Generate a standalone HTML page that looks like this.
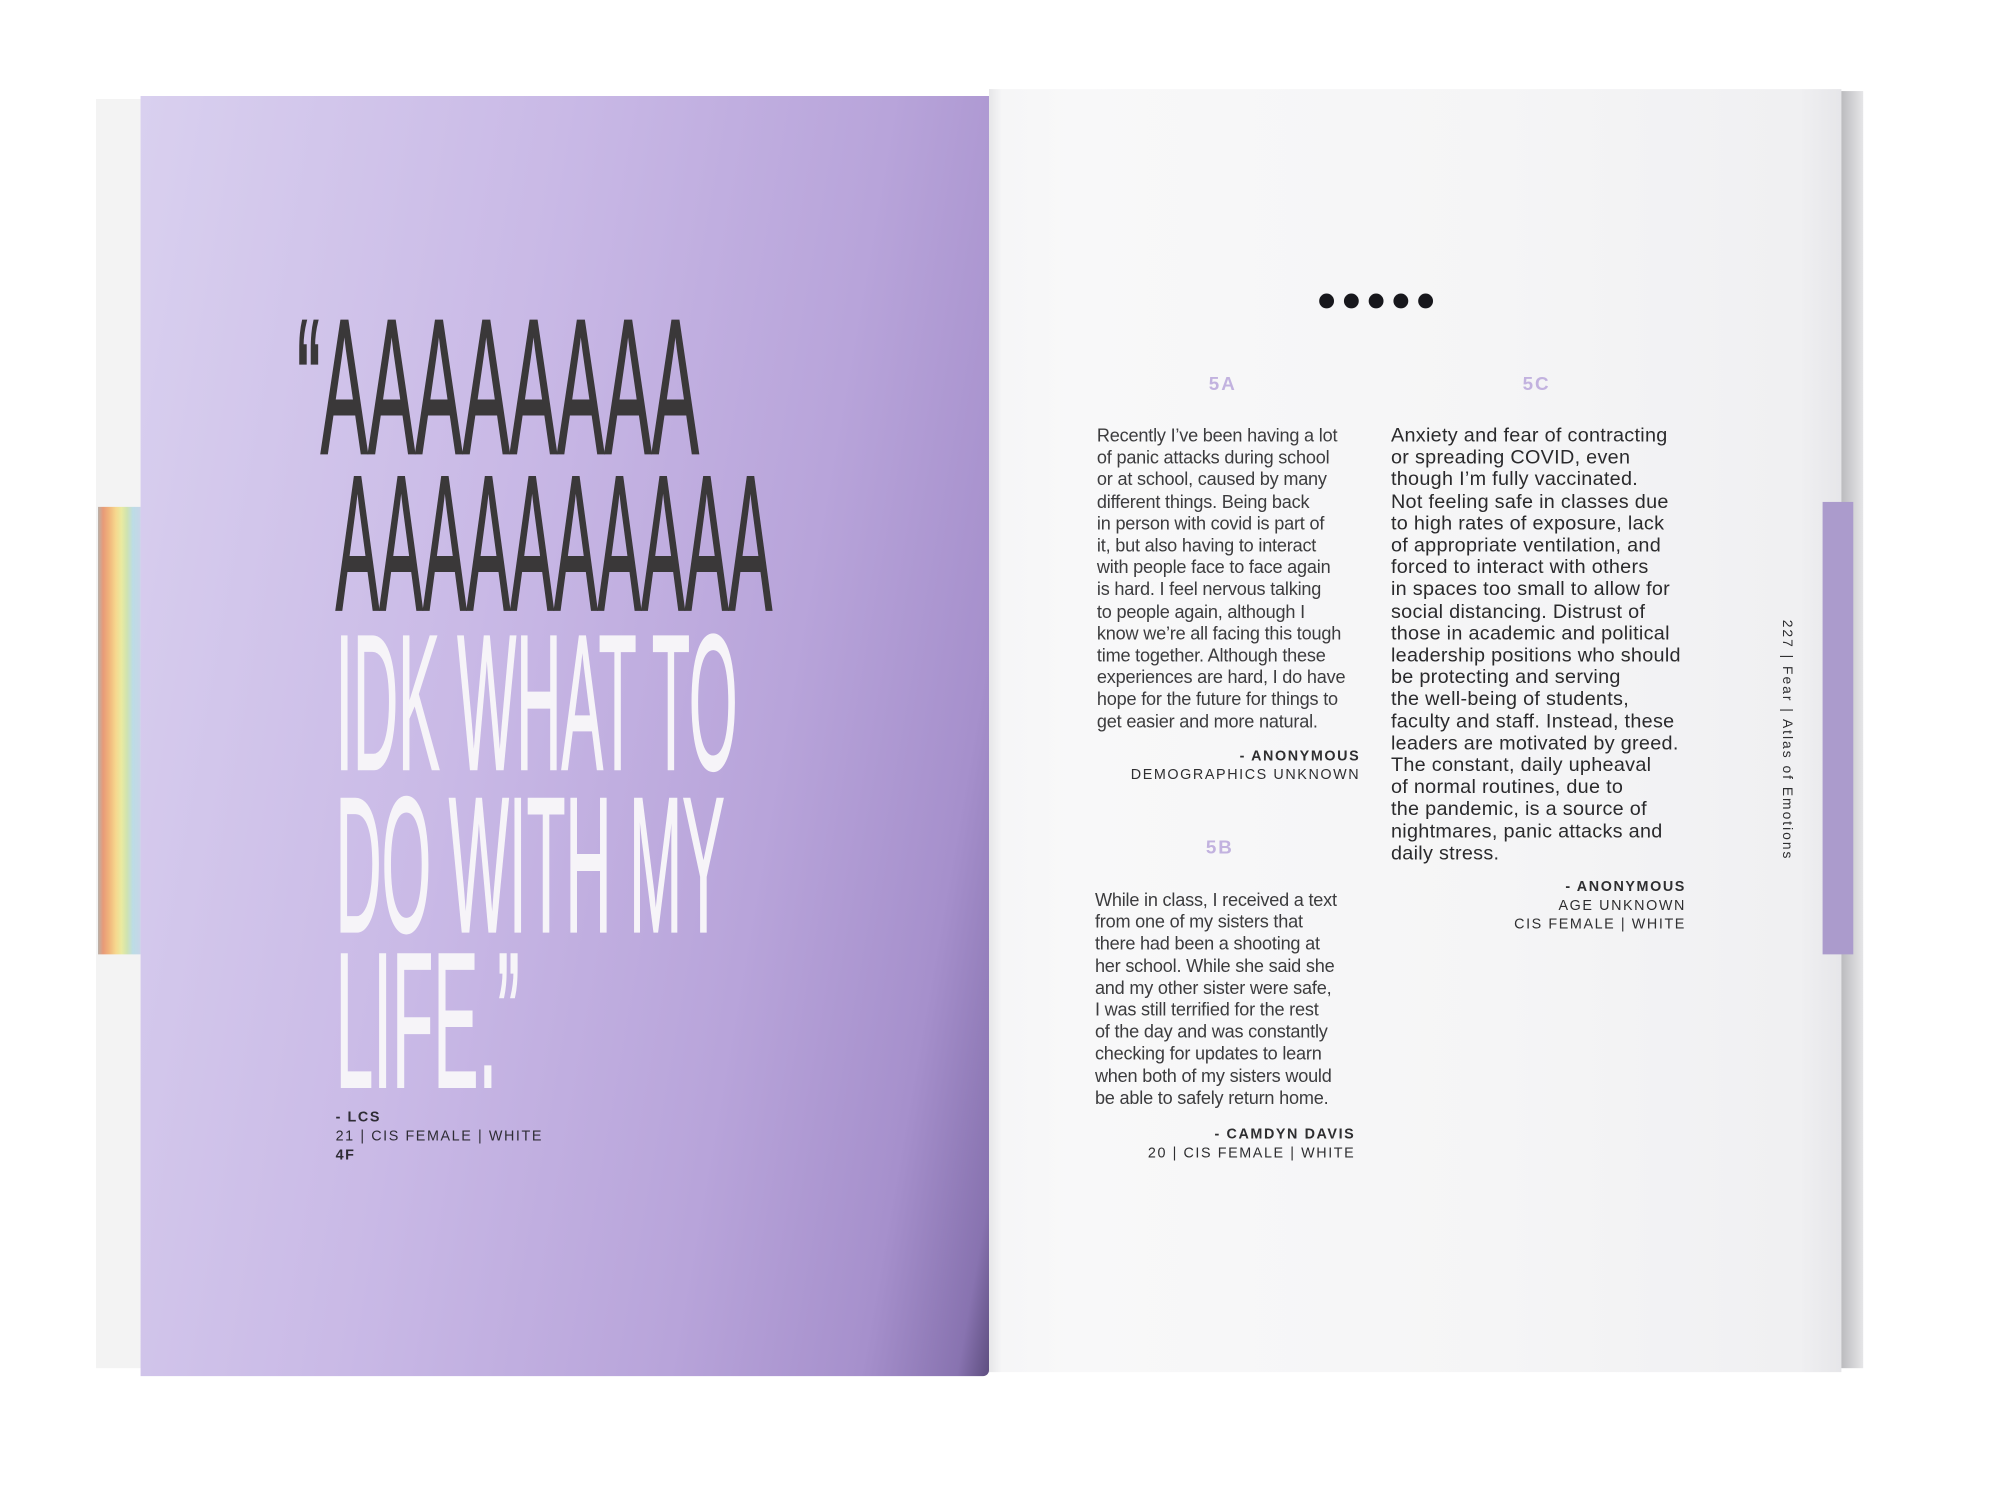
<!DOCTYPE html>
<html><head><meta charset="utf-8"><style>
*{margin:0;padding:0;box-sizing:border-box}
body{width:2000px;height:1500px;background:#fff;position:relative;overflow:hidden;font-family:"Liberation Sans",sans-serif}
#w{position:absolute;left:0;top:0;width:2000px;height:1500px;transform-origin:0 0;transform:scale(0.99)}
.a{position:absolute}
.p{position:absolute;white-space:nowrap;color:#3a3a3c}
.r{text-align:right}
.lbl{color:#c2b2df;font-weight:bold;font-size:19px;letter-spacing:2px}
.cap{font-size:14.5px;letter-spacing:1.6px;color:#2e2e30;line-height:19px}
</style></head><body><div id="w">
<div class="a" style="left:97px;top:100px;width:60px;height:1282px;background:#f3f3f3"></div>
<div class="a" style="left:99px;top:512px;width:43px;height:452px;background:linear-gradient(90deg,#b8b0a8 0,#e89a78 12%,#f0b27a 25%,#f6d88e 42%,#eaeaa0 55%,#cfe3b0 68%,#bcdce6 82%,#c7d5e8 100%)"></div>
<div class="a" style="left:142px;top:97px;width:857px;height:1293px;background:linear-gradient(100deg,#d9d0ef 0%,#c9b9e6 40%,#b8a4da 70%,#a690cc 88%,#8873b0 97%,#5e4e80 100%);border-radius:0 0 6px 0"></div>
<div class="a" style="left:1840px;top:92px;width:42px;height:1290px;background:linear-gradient(90deg,#d8d8da,#bdbdc0 50%,#e6e6e8)"></div>
<div class="a" style="left:999px;top:90px;width:861px;height:1296px;background:linear-gradient(90deg,#e6e6e8 0,#f6f6f7 1.5%,#f8f8f9 10%,#f5f5f6 60%,#f0f0f2 95%,#e6e6e9 100%)"></div>
<div class="a" style="left:1841px;top:507px;width:31px;height:457px;background:#ab9bcc"></div>

<svg class="a" style="left:0;top:0" width="2000" height="1500">
<g font-family="Liberation Sans, sans-serif" font-size="195" stroke-width="2">
<text x="300" y="458" fill="#3a3839" stroke="#3a3839" textLength="406" lengthAdjust="spacingAndGlyphs">“AAAAAAAA</text>
<text x="339" y="616" fill="#3a3839" stroke="#3a3839" textLength="441" lengthAdjust="spacingAndGlyphs">AAAAAAAAAA</text>
<text x="339" y="777" fill="#f6f4f8" stroke="#f6f4f8" textLength="406" lengthAdjust="spacingAndGlyphs">IDK WHAT TO</text>
<text x="339" y="941" fill="#f6f4f8" stroke="#f6f4f8" textLength="393" lengthAdjust="spacingAndGlyphs">DO WITH MY</text>
<text x="339" y="1098" fill="#f6f4f8" stroke="#f6f4f8" textLength="186" lengthAdjust="spacingAndGlyphs">LIFE.”</text>
</g>
<g fill="#17171c"><circle cx="1340" cy="304" r="7.5"/><circle cx="1365" cy="304" r="7.5"/><circle cx="1390" cy="304" r="7.5"/><circle cx="1415" cy="304" r="7.5"/><circle cx="1440" cy="304" r="7.5"/></g>
</svg>

<div class="p cap" style="left:339px;top:1120px;color:#2e2c34"><b>- LCS</b><br>21 | CIS FEMALE | WHITE<br><b>4F</b></div>

<div class="p lbl" style="left:1221px;top:378px">5A</div>
<div class="p lbl" style="left:1538px;top:378px">5C</div>
<div class="p lbl" style="left:1218px;top:846px">5B</div>

<div class="p" style="left:1108px;top:429px;font-size:18.3px;line-height:22.2px;color:#3c3c3e;letter-spacing:-0.2px">Recently I’ve been having a lot<br>of panic attacks during school<br>or at school, caused by many<br>different things. Being back<br>in person with covid is part of<br>it, but also having to interact<br>with people face to face again<br>is hard. I feel nervous talking<br>to people again, although I<br>know we’re all facing this tough<br>time together. Although these<br>experiences are hard, I do have<br>hope for the future for things to<br>get easier and more natural.</div>
<div class="p cap r" style="right:626px;top:755px"><b>- ANONYMOUS</b><br>DEMOGRAPHICS UNKNOWN</div>

<div class="p" style="left:1106px;top:898px;font-size:18.3px;line-height:22.2px;color:#3c3c3e;letter-spacing:-0.2px">While in class, I received a text<br>from one of my sisters that<br>there had been a shooting at<br>her school. While she said she<br>and my other sister were safe,<br>I was still terrified for the rest<br>of the day and was constantly<br>checking for updates to learn<br>when both of my sisters would<br>be able to safely return home.</div>
<div class="p cap r" style="right:631px;top:1137px"><b>- CAMDYN DAVIS</b><br>20 | CIS FEMALE | WHITE</div>

<div class="p" style="left:1405px;top:429px;font-size:20px;line-height:22.2px;color:#2a2a2c;letter-spacing:0.3px">Anxiety and fear of contracting<br>or spreading COVID, even<br>though I’m fully vaccinated.<br>Not feeling safe in classes due<br>to high rates of exposure, lack<br>of appropriate ventilation, and<br>forced to interact with others<br>in spaces too small to allow for<br>social distancing. Distrust of<br>those in academic and political<br>leadership positions who should<br>be protecting and serving<br>the well-being of students,<br>faculty and staff. Instead, these<br>leaders are motivated by greed.<br>The constant, daily upheaval<br>of normal routines, due to<br>the pandemic, is a source of<br>nightmares, panic attacks and<br>daily stress.</div>
<div class="p cap r" style="right:297px;top:887px"><b>- ANONYMOUS</b><br>AGE UNKNOWN<br>CIS FEMALE | WHITE</div>

<div class="p" style="left:1814px;top:626px;transform-origin:0 0;transform:rotate(90deg);font-size:14px;letter-spacing:2px;color:#2e2e30">227 | Fear | Atlas of Emotions</div>
</div></body></html>
